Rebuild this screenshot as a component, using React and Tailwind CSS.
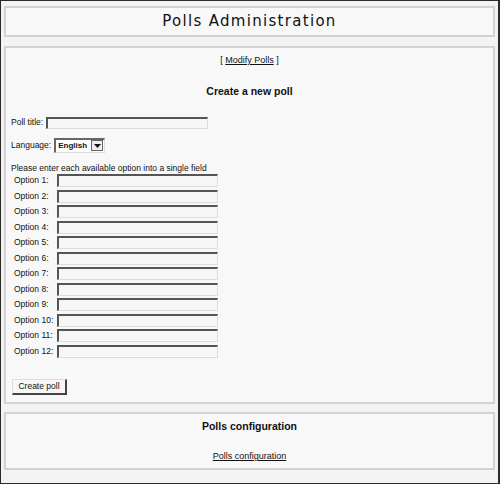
import React from 'react';

const TITLE_FONT = { fontFamily: '"DejaVu Sans", Verdana, sans-serif' };
const FONT = { fontFamily: '"Liberation Sans", Arial, sans-serif' };

function Inset({ className }) {
  return (
    <div
      className={`shrink-0 border-t-2 border-l-2 border-b border-r border-t-[#555] border-l-[#555] border-b-[#ddd] border-r-[#ddd] bg-[#f7f7f7] ${className}`}
    />
  );
}

export default function App() {
  const options = Array.from({ length: 12 }, (_, i) => i + 1);

  return (
    <div
      className="w-[500px] h-[484px] border border-[#2a2a2a] border-r-2 bg-[#f3f3f3] px-[3px] pt-[5px] text-[#111]"
      style={FONT}
    >
      {/* Header */}
      <div className="h-[31px] border-2 border-[#d2d2d2] bg-[#f8f8f8] flex items-center justify-center">
        <h1 className="text-[15px] tracking-[1.3px] text-[#111]" style={TITLE_FONT}>Polls Administration</h1>
      </div>

      {/* Create poll panel */}
      <div className="mt-[9px] h-[358px] border-2 border-[#d2d2d2] bg-[#f8f8f8]">
        <div className="pt-[6px] text-center text-[9px] leading-[12px]">
          [ <span className="underline">Modify Polls</span> ]
        </div>
        <div className="mt-[18px] text-center text-[10.5px] font-bold leading-[14px]">Create a new poll</div>

        <div className="pl-[5px] text-[8.5px]">
          <div className="mt-[18px] flex items-center h-[13px] gap-[3px]">
            <span>Poll title:</span>
            <Inset className="w-[162px] h-[12px]" />
          </div>

          <div className="mt-[8px] flex items-center h-[16px] gap-[3px]">
            <span>Language:</span>
            <div className="w-[51px] flex items-center justify-between border-t-2 border-l-2 border-b border-r border-t-[#666] border-l-[#666] border-b-[#ddd] border-r-[#ddd] h-[15px] bg-white">
              <span className="font-bold pl-[2px] leading-[12px] text-[8px]">English</span>
              <div className="mr-[1px] w-[12px] h-[11px] border border-[#666] bg-[#eee] flex items-center justify-center">
                <svg width="7" height="4" viewBox="0 0 7 4">
                  <path d="M0 0h7L3.5 4z" fill="#111" />
                </svg>
              </div>
            </div>
          </div>

          <div className="mt-[9px] leading-[12px]">Please enter each available option into a single field</div>

          <div className="flex flex-col gap-[2.5px] pl-[3px]">
            {options.map((n) => (
              <div key={n} className="flex items-center h-[13px]">
                <span className="w-[43px] shrink-0 whitespace-nowrap">Option {n}:</span>
                <Inset className="w-[161px] h-[13px]" />
              </div>
            ))}
          </div>

          <button className="mt-[21px] ml-[1px] w-[55px] h-[16px] border-t border-l border-b-2 border-r-2 border-t-[#ddd] border-l-[#ddd] border-b-[#444] border-r-[#444] bg-[#f7f7f7] text-[8.5px] leading-[12px]">
            Create poll
          </button>
        </div>
      </div>

      {/* Config panel */}
      <div className="mt-[8px] h-[58px] border-2 border-[#d2d2d2] bg-[#f8f8f8]">
        <div className="pt-[5px] text-center text-[10.5px] font-bold leading-[14px]">Polls configuration</div>
        <div className="mt-[17px] text-center text-[9px] underline leading-[12px]">Polls configuration</div>
      </div>
    </div>
  );
}
